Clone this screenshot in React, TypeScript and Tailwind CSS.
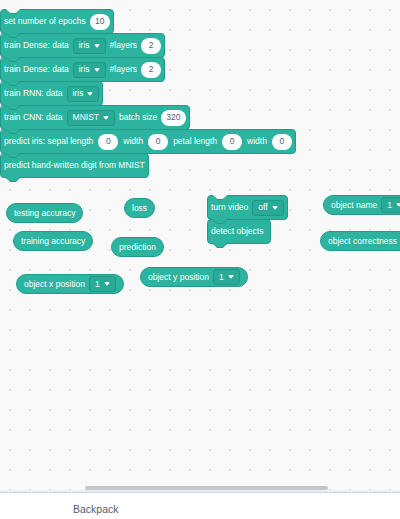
import type { ReactNode } from "react";

function Arrow() {
  return (
    <svg width="6" height="4" viewBox="0 0 6 4" className="shrink-0">
      <path
        d="M0.8 0.6 H5.2 L3 3.3 Z"
        fill="white"
        stroke="white"
        strokeWidth="0.9"
        strokeLinejoin="round"
      />
    </svg>
  );
}

function Dropdown({ label }: { label: string }) {
  return (
    <span className="flex h-[16px] items-center gap-[4px] rounded-[3px] border border-[#1f9784] bg-[#29aa97] px-[5px]">
      {label}
      <Arrow />
    </span>
  );
}

function Num({ value }: { value: string }) {
  return (
    <span className="flex h-[16px] min-w-[20px] items-center justify-center rounded-full bg-white px-[5px] text-[#575e75]">
      {value}
    </span>
  );
}

const CURVE =
  "M0 0.5 C1 0.5 1.5 1 2 1.5 L4 3.5 C4.5 4 5 4.5 6 4.5 H10 C11 4.5 11.5 4 12 3.5 L14 1.5 C14.5 1 15 0.5 16 0.5";

function StackBlock({
  children,
  first,
  wide,
}: {
  children: ReactNode;
  first?: boolean;
  wide?: boolean;
}) {
  let cls =
    "relative flex h-[25px] items-center rounded-[4px] border border-[#219a87] bg-[#2db4a0] pl-[3px] pr-[3px]";
  cls += first ? "" : " -mt-px";
  cls += wide ? " gap-[5px]" : " gap-[4px]";
  return (
    <div className={cls}>
      {/* notch on top of the first block */}
      {first && (
        <svg
          className="absolute left-[4px] top-[-1px] overflow-visible"
          width="16"
          height="5"
        >
          <path d={CURVE + " L16 -1 L0 -1 Z"} fill="#f9f9f9" />
          <path d={CURVE} fill="none" stroke="#219a87" />
        </svg>
      )}
      {children}
      {/* tab under every block */}
      <svg
        className="absolute left-[4px] top-full z-10 overflow-visible"
        width="16"
        height="5"
      >
        <path d={CURVE + " L16 -1 L0 -1 Z"} fill="#2db4a0" />
        <path d={CURVE} fill="none" stroke="#219a87" />
      </svg>
    </div>
  );
}

function Reporter({
  className,
  children,
}: {
  className: string;
  children: ReactNode;
}) {
  return (
    <div
      className={
        "absolute flex h-[20px] items-center gap-[4px] whitespace-nowrap rounded-full border border-[#229c89] bg-[#2db4a0] pl-[7px] " +
        className
      }
    >
      {children}
    </div>
  );
}

export default function App() {
  return (
    <div className="flex h-[519px] w-[400px] flex-col overflow-hidden bg-white font-['Liberation_Sans',Arial,sans-serif] text-[8.5px] leading-none text-white">
      {/* Workspace */}
      <div className="relative flex-1 overflow-hidden bg-[#f9f9f9] bg-[radial-gradient(circle,#dcdcdc_0.8px,transparent_1.1px)] bg-[length:20px_20px]">
        {/* Main stack */}
        <div className="absolute left-0 top-[9px] flex flex-col items-start whitespace-nowrap">
          <StackBlock first>
            <span>set number of epochs</span>
            <Num value="10" />
          </StackBlock>
          <StackBlock>
            <span>train Dense: data</span>
            <Dropdown label="iris" />
            <span>#layers</span>
            <Num value="2" />
          </StackBlock>
          <StackBlock>
            <span>train Dense: data</span>
            <Dropdown label="iris" />
            <span>#layers</span>
            <Num value="2" />
          </StackBlock>
          <StackBlock>
            <span>train RNN: data</span>
            <Dropdown label="iris" />
          </StackBlock>
          <StackBlock>
            <span>train CNN: data</span>
            <Dropdown label="MNIST" />
            <span>batch size</span>
            <Num value="320" />
          </StackBlock>
          <StackBlock wide>
            <span>predict iris: sepal length</span>
            <Num value="0" />
            <span>width</span>
            <Num value="0" />
            <span>petal length</span>
            <Num value="0" />
            <span>width</span>
            <Num value="0" />
          </StackBlock>
          <StackBlock>
            <span>predict hand-written digit from MNIST</span>
          </StackBlock>
        </div>

        {/* Video stack */}
        <div className="absolute left-[207px] top-[195px] flex flex-col items-start whitespace-nowrap">
          <StackBlock first>
            <span>turn video</span>
            <Dropdown label="off" />
          </StackBlock>
          <StackBlock>
            <span className="pr-[4px]">detect objects</span>
          </StackBlock>
        </div>

        {/* Reporters */}
        <Reporter className="left-[6px] top-[203px] pr-[7px]">testing accuracy</Reporter>
        <Reporter className="left-[124px] top-[198px] pr-[7px]">loss</Reporter>
        <Reporter className="left-[13px] top-[231px] pr-[7px]">training accuracy</Reporter>
        <Reporter className="left-[111px] top-[237px] pr-[7px]">prediction</Reporter>
        <Reporter className="left-[16px] top-[274px] pr-[7px]">
          <span>object x position</span>
          <Dropdown label="1" />
        </Reporter>
        <Reporter className="left-[140px] top-[267px] pr-[7px]">
          <span>object y position</span>
          <Dropdown label="1" />
        </Reporter>
        <Reporter className="left-[323px] top-[195px] pr-[7px]">
          <span>object name</span>
          <Dropdown label="1" />
        </Reporter>
        <Reporter className="left-[320px] top-[231px] pr-[14px]">
          <span>object correctness</span>
        </Reporter>

        {/* Horizontal scrollbar */}
        <div className="absolute bottom-0 left-[85px] h-[4px] w-[243px] rounded-full bg-[#c6c6c6]" />
      </div>

      {/* Backpack header */}
      <div className="h-[2px] bg-[#e8eef8]" />
      <div className="h-[27px] border-t border-[#c9d6ec] bg-white pl-[73px] pt-[11px] text-[10.5px] text-[#575e75]">
        Backpack
      </div>
    </div>
  );
}
